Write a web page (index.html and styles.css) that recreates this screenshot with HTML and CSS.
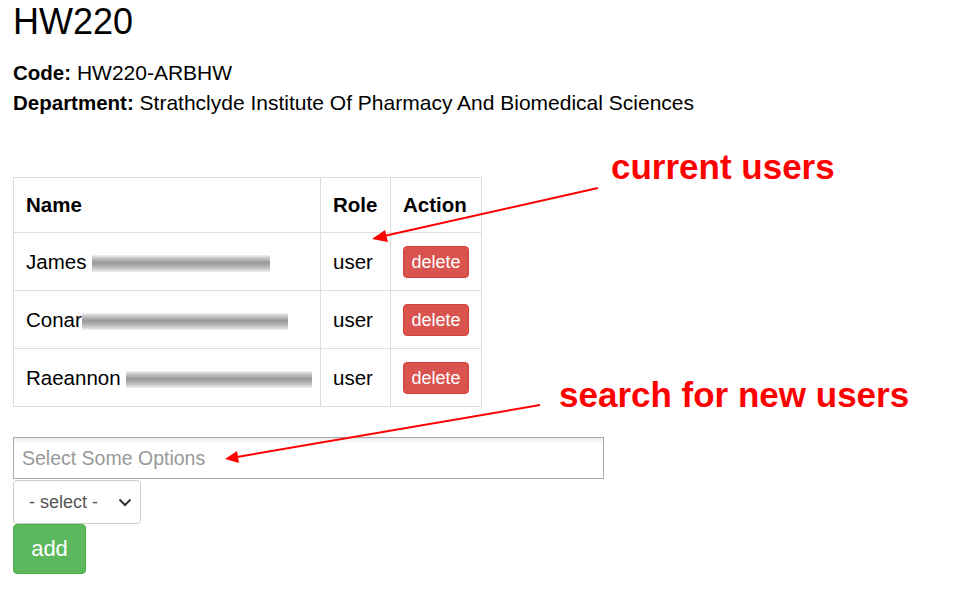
FILE: index.html
```html
<!DOCTYPE html>
<html>
<head>
<meta charset="utf-8">
<link rel="stylesheet" href="styles.css">
</head>
<body>
<div class="page">
  <h1 class="title">HW220</h1>
  <p class="meta"><b>Code:</b> HW220-ARBHW</p>
  <p class="meta"><b>Department:</b> Strathclyde Institute Of Pharmacy And Biomedical Sciences</p>

  <table class="users">
    <colgroup><col class="c-name"><col class="c-role"><col class="c-act"></colgroup>
    <thead>
      <tr><th>Name</th><th>Role</th><th>Action</th></tr>
    </thead>
    <tbody>
      <tr><td>James <span class="blur" style="width:178px"></span></td><td>user</td><td><button class="btn-del">delete</button></td></tr>
      <tr><td>Conar<span class="blur" style="width:206px"></span></td><td>user</td><td><button class="btn-del">delete</button></td></tr>
      <tr><td>Raeannon <span class="blur" style="width:186px"></span></td><td>user</td><td><button class="btn-del">delete</button></td></tr>
    </tbody>
  </table>

  <div class="chosen">Select Some Options</div>
  <div class="sel">- select - <svg class="chev" width="14" height="9" viewBox="0 0 14 9"><path d="M1.5 1.5 L7 7 L12.5 1.5" fill="none" stroke="#333" stroke-width="2"/></svg></div>
  <button class="btn-add">add</button>
</div>

<div class="note note1">current users</div>
<div class="note note2">search for new users</div>
<svg class="arrows" width="966" height="602" viewBox="0 0 966 602">
  <line x1="598" y1="188" x2="384" y2="236" stroke="#f00" stroke-width="2"/>
  <polygon points="372,239 385,230 388,242" fill="#f00"/>
  <line x1="540" y1="405" x2="237" y2="457" stroke="#f00" stroke-width="2"/>
  <polygon points="225,459 237,451 239,463" fill="#f00"/>
</svg>
</body>
</html>
```

FILE: styles.css
```css
html, body { margin: 0; padding: 0; background: #fff; }
body { font-family: "Liberation Sans", Arial, sans-serif; color: #000; }
.page { padding: 0 13px; position: relative; }
.title { font-size: 36px; font-weight: normal; margin: 0; padding-top: 1px; line-height: 42px; }
.meta { font-size: 21px; margin: 0; line-height: 30px; }
.meta b { font-size: 20.5px; }
.meta:first-of-type { margin-top: 15px; }
.users { border-collapse: collapse; margin-top: 59px; font-size: 20.5px; table-layout: fixed; width: 468px; }
.c-name { width: 307px; }
.c-role { width: 70px; }
.c-act { width: 91px; }
.users th, .users td { border: 1px solid #ddd; padding: 12px 12px; text-align: left; vertical-align: middle; white-space: nowrap; }
.users th { font-weight: bold; height: 30px; padding-top: 12px; padding-bottom: 12px; }
.users td { height: 33px; }
.blur { display: inline-block; height: 17px; vertical-align: -3px;
  background: linear-gradient(180deg, #f2f2f2 0%, #c4c4c4 20%, #9a9a9a 45%, #a8a8a8 60%, #c8c8c8 80%, #f0f0f0 100%);
  filter: blur(0.7px); }
.btn-del { font-family: "Liberation Sans", Arial, sans-serif; font-size: 18px; color: #fff; background: #d9534f; border: 1px solid #d43f3a; border-radius: 4px; width: 66px; height: 32px; padding: 0; line-height: 30px; }
.chosen { margin-top: 30px; height: 40px; border: 1px solid #aaa; font-size: 19.5px; color: #999; line-height: 40px; padding-left: 8px; box-sizing: content-box; width: 581px; background: linear-gradient(#eee 1%, #fff 15%); }
.sel { margin-top: 1px; width: 126px; height: 42px; box-sizing: content-box; border: 1px solid #ccc; border-radius: 4px; font-size: 18px; color: #555; line-height: 42px; text-indent: 15px; position: relative; }
.chev { position: absolute; right: 8px; top: 17px; }
.btn-add { display: block; width: 73px; height: 50px; background: #5cb85c; border: 1px solid #4cae4c; border-radius: 4px; color: #fff; font-size: 22px; font-family: "Liberation Sans", Arial, sans-serif; padding: 0; }
.note { position: absolute; color: #f00; font-weight: bold; font-size: 35px; font-family: "Liberation Sans", Arial, sans-serif; line-height: 40px; }
.note1 { left: 611px; top: 147px; }
.note2 { left: 559px; top: 375px; }
.arrows { position: absolute; left: 0; top: 0; pointer-events: none; }
```
